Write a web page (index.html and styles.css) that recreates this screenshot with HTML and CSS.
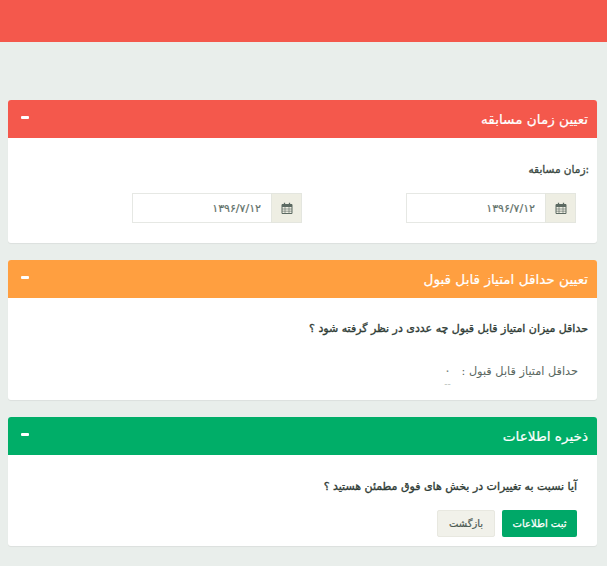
FILE: index.html
```html
<!DOCTYPE html>
<html lang="fa" dir="rtl">
<head>
<meta charset="utf-8">
<title>تعیین زمان مسابقه</title>
<link rel="stylesheet" href="styles.css">
</head>
<body>
<header class="topbar"></header>
<main class="content">
  <section class="card">
    <div class="card-head red"><h2>تعیین زمان مسابقه</h2><span class="dash"></span></div>
    <div class="card-body body-time">
      <p class="label">:زمان مسابقه</p>
      <div class="dates">
        <div class="date">
          <span class="addon"><svg class="cal" viewBox="0 0 12 12"><path d="M1 2.5h10v9H1z" fill="none" stroke="#5c6a62" stroke-width="1"/><path d="M1 2.5h10v2.5H1z" fill="#5c6a62"/><path d="M3.5 .8v2M8.5 .8v2" stroke="#5c6a62" stroke-width="1.3"/><path d="M1 7h10M1 9.2h10M4 5v6M8 5v6" stroke="#5c6a62" stroke-width=".6"/></svg></span>
          <span class="field">۱۳۹۶/۷/۱۲</span>
        </div>
        <div class="date">
          <span class="addon"><svg class="cal" viewBox="0 0 12 12"><path d="M1 2.5h10v9H1z" fill="none" stroke="#5c6a62" stroke-width="1"/><path d="M1 2.5h10v2.5H1z" fill="#5c6a62"/><path d="M3.5 .8v2M8.5 .8v2" stroke="#5c6a62" stroke-width="1.3"/><path d="M1 7h10M1 9.2h10M4 5v6M8 5v6" stroke="#5c6a62" stroke-width=".6"/></svg></span>
          <span class="field">۱۳۹۶/۷/۱۲</span>
        </div>
      </div>
    </div>
  </section>
  <section class="card">
    <div class="card-head orange"><h2>تعیین حداقل امتیاز قابل قبول</h2><span class="dash"></span></div>
    <div class="card-body body-score">
      <p class="question">حداقل میزان امتیاز قابل قبول چه عددی در نظر گرفته شود ؟</p>
      <div class="score">
        <span class="score-label">حداقل امتیاز قابل قبول :</span>
        <span class="score-value">
          <span class="zero">۰</span>
          <span class="dots">--</span>
        </span>
      </div>
    </div>
  </section>
  <section class="card">
    <div class="card-head green"><h2>ذخیره اطلاعات</h2><span class="dash"></span></div>
    <div class="card-body body-save">
      <p class="confirm">آیا نسبت به تغییرات در بخش های فوق مطمئن هستید ؟</p>
      <div class="actions">
        <button class="btn primary" type="button">ثبت اطلاعات</button>
        <button class="btn plain" type="button">بازگشت</button>
      </div>
    </div>
  </section>
</main>
</body>
</html>
```
FILE: styles.css
```css
* { box-sizing: border-box; }
html, body { margin: 0; padding: 0; }
body {
  height: 566px;
  overflow: hidden;
  background: #e9eeeb;
  font-family: "DejaVu Sans", sans-serif;
  color: #3c4a44;
}
.topbar { height: 42px; background: #f4584c; }
.content {
  display: flex;
  flex-direction: column;
  gap: 17px;
  padding: 58px 10px 0 8px;
}
.card {
  background: #fff;
  border-radius: 3px;
  overflow: hidden;
  box-shadow: 0 1px 1px rgba(0,0,0,.06);
}
.card-head {
  height: 38px;
  display: flex;
  align-items: center;
  justify-content: space-between;
  padding: 2px 9px 0 13px;
  color: #fff;
}
.card-head h2 { margin: 0; font-size: 13.6px; font-weight: 400; line-height: 1; -webkit-text-stroke: .2px #fff; }
.red { background: #f4584c; }
.orange { background: #ff9f40; }
.green { background: #00ae68; }
.dash { width: 8px; height: 3px; margin-bottom: 5px; background: #fff; border-radius: 1px; }
.card-body { position: relative; }
.body-time { height: 105px; padding: 23px 8px 0 0; }
.label { margin: 0; font-size: 10.5px; line-height: 16px; color: #3c4a44; -webkit-text-stroke: .35px #3c4a44; }
.dates {
  display: flex;
  gap: 103.5px;
  margin-top: 16px;
  padding-right: 13px;
}
.date { display: flex; width: 170.5px; height: 30px; }
.addon {
  flex: 0 0 31px;
  display: flex;
  align-items: center;
  justify-content: center;
  background: #eeeee3;
  border: 1px solid #e4e6df;
}
.cal { width: 12px; height: 12px; }
.field {
  flex: 1;
  display: flex;
  align-items: center;
  padding-right: 10px;
  border: 1px solid #e6e8e4;
  border-right: 0;
  font-size: 11px;
  color: #5f7169;
  -webkit-text-stroke: .2px #5f7169;
}
.body-score { height: 102px; padding: 23px 9px 0 0; }
.question { margin: 0; font-size: 11px; line-height: 16px; color: #2f3c36; -webkit-text-stroke: .35px #2f3c36; }
.score {
  display: flex;
  align-items: flex-start;
  gap: 9px;
  margin-top: 27px;
  padding-right: 10px;
  color: #59675f;
}
.score-label { font-size: 11.3px; line-height: 16px; }
.score-value { display: flex; flex-direction: column; align-items: center; width: 10px; }
.zero { font-size: 13px; line-height: 13px; color: #7f8884; }
.dots { font-size: 9px; line-height: 5px; margin-top: 5px; color: #b5bcb8; }
.body-save { height: 91px; padding: 24px 20px 0 0; }
.confirm { margin: 0; font-size: 11px; line-height: 16px; color: #2f3c36; -webkit-text-stroke: .35px #2f3c36; }
.actions { display: flex; gap: 7px; margin-top: 15px; }
.btn {
  height: 27px;
  border-radius: 2px;
  border: 1px solid transparent;
  font-family: inherit;
  font-size: 10px;
  padding: 0;
}
.primary { width: 75px; background: #00a868; color: #fff; -webkit-text-stroke: .25px #fff; }
.plain { width: 58px; background: #f1f1ea; border-color: #e8e8e0; color: #4c5a53; -webkit-text-stroke: .2px #4c5a53; }
```
